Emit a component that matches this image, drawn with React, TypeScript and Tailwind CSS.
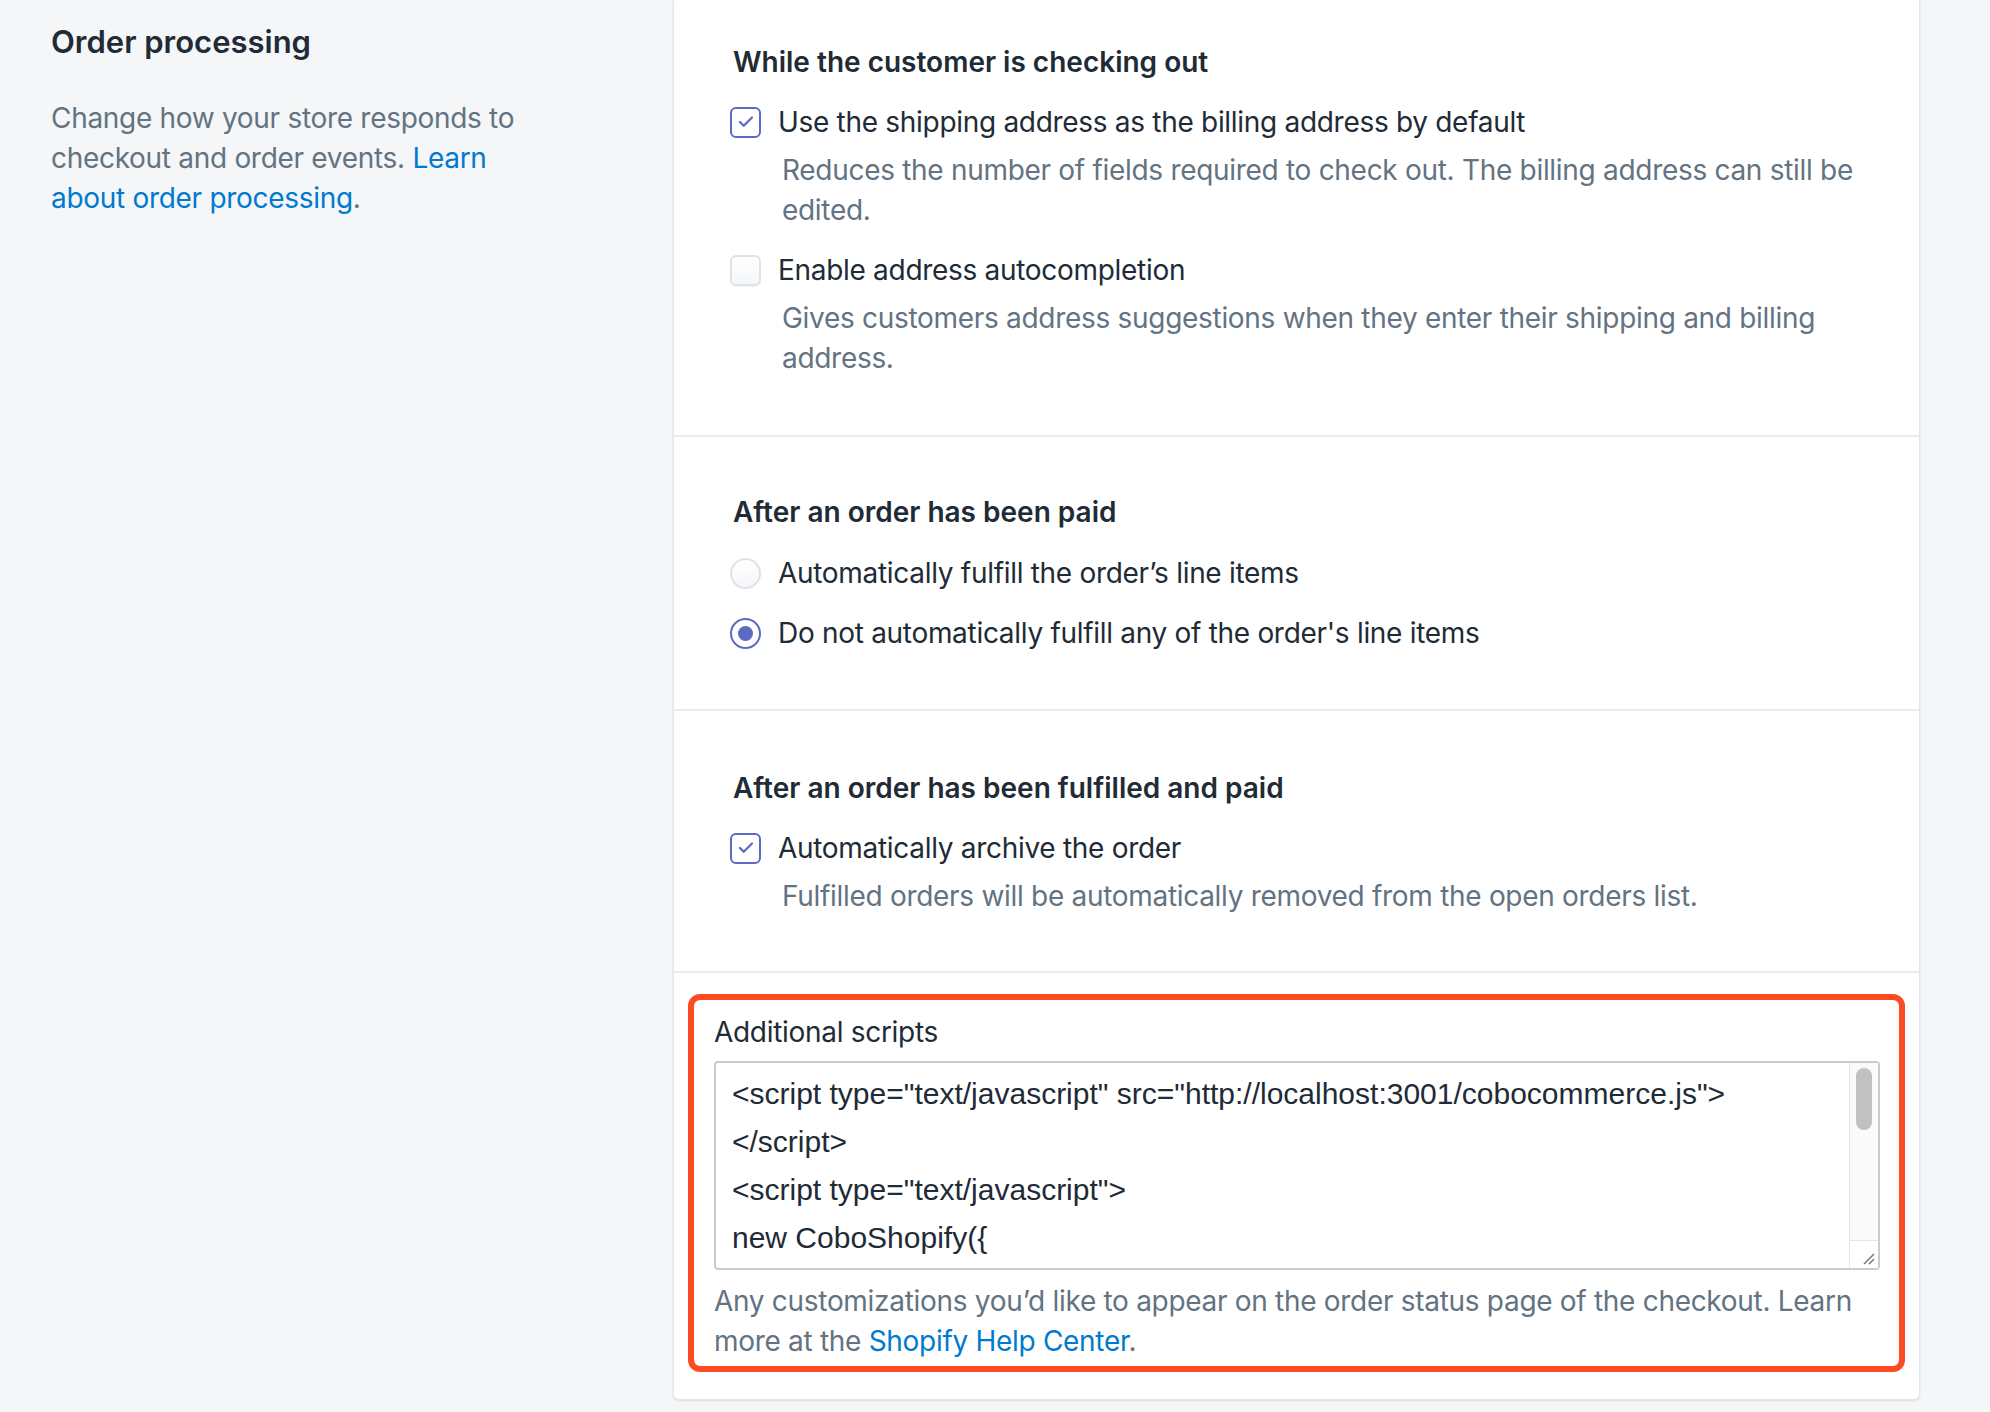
import { Check } from 'lucide-react';

const FONT = { fontFamily: 'Inter, "Noto Sans", sans-serif' };

function Checkbox({ checked }: { checked?: boolean }) {
  if (checked) {
    return (
      <span className="flex h-[31px] w-[31px] shrink-0 items-center justify-center rounded-[6px] border-2 border-[#5c6ac4] bg-white">
        <Check className="h-[18px] w-[18px] text-[#5c6ac4]" strokeWidth={3} />
      </span>
    );
  }
  return (
    <span className="block h-[31px] w-[31px] shrink-0 rounded-[6px] border-2 border-[#dfe3e8] bg-gradient-to-b from-white to-[#f4f6f8] shadow-[0_1px_0_rgba(22,29,37,0.05)]" />
  );
}

function Radio({ checked }: { checked?: boolean }) {
  if (checked) {
    return (
      <span className="flex h-[31px] w-[31px] shrink-0 items-center justify-center rounded-full border-2 border-[#5c6ac4] bg-white">
        <span className="block h-[15px] w-[15px] rounded-full bg-[#5c6ac4]" />
      </span>
    );
  }
  return (
    <span className="block h-[31px] w-[31px] shrink-0 rounded-full border-2 border-[#dfe3e8] bg-gradient-to-b from-white to-[#f4f6f8]" />
  );
}

function Option({
  control,
  label,
  help,
}: {
  control: React.ReactNode;
  label: string;
  help?: string;
}) {
  return (
    <div>
      <div className="flex items-center gap-[17px]">
        {control}
        <span className="text-[28px] leading-[40px] tracking-[-0.3px] text-[#212b36]">{label}</span>
      </div>
      {help && (
        <p className="mt-[8px] pl-[52px] text-[28px] leading-[40px] tracking-[-0.3px] text-[#637381]">{help}</p>
      )}
    </div>
  );
}

function Heading({ children }: { children: React.ReactNode }) {
  return <h3 className="pl-[3px] text-[28px] font-semibold leading-[40px] text-[#212b36]">{children}</h3>;
}

const SCRIPT_LINES = [
  '<script type="text/javascript" src="http://localhost:3001/cobocommerce.js">',
  '</script>',
  '<script type="text/javascript">',
  'new CoboShopify({',
];

export default function App() {
  return (
    <div className="flex min-h-[1412px] w-[1990px] bg-[#f4f6f8]" style={FONT}>
      {/* Description column */}
      <div className="w-[673px] shrink-0 pl-[51px] pt-[22px]">
        <h2 className="text-[31px] font-semibold leading-[40px] text-[#212b36]">Order processing</h2>
        <p className="mt-[36px] w-[480px] text-[28px] leading-[40px] tracking-[-0.3px] text-[#637381]">
          Change how your store responds to checkout and order events.{' '}
          <a className="text-[#007ace]">Learn about order processing</a>.
        </p>
      </div>

      {/* Settings card */}
      <div className="h-[1400px] w-[1247px] shrink-0 rounded-b-[6px] border-x border-b border-[#e3e6ea] bg-white shadow-[0_1px_2px_rgba(63,63,68,0.15)]">
        <section className="border-b-2 border-[#e9ecef] px-[56px] pb-[57px] pt-[42px]">
          <Heading>While the customer is checking out</Heading>
          <div className="mt-[20px] flex flex-col gap-[20px]">
            <Option
              control={<Checkbox checked />}
              label="Use the shipping address as the billing address by default"
              help="Reduces the number of fields required to check out. The billing address can still be edited."
            />
            <Option
              control={<Checkbox />}
              label="Enable address autocompletion"
              help="Gives customers address suggestions when they enter their shipping and billing address."
            />
          </div>
        </section>

        <section className="border-b-2 border-[#e9ecef] px-[56px] pb-[56px] pt-[55px]">
          <Heading>After an order has been paid</Heading>
          <div className="mt-[21px] flex flex-col gap-[20px]">
            <Option control={<Radio />} label="Automatically fulfill the order’s line items" />
            <Option control={<Radio checked />} label="Do not automatically fulfill any of the order's line items" />
          </div>
        </section>

        <section className="border-b-2 border-[#e9ecef] px-[56px] pb-[55px] pt-[57px]">
          <Heading>After an order has been fulfilled and paid</Heading>
          <div className="mt-[20px]">
            <Option
              control={<Checkbox checked />}
              label="Automatically archive the order"
              help="Fulfilled orders will be automatically removed from the open orders list."
            />
          </div>
        </section>

        <section className="px-[14px] pt-[21px]">
          <div className="rounded-[12px] border-[6px] border-[#fe4a22] pb-[5px] pl-[20px] pr-[19px] pt-[12px]">
            <label className="block text-[28px] leading-[40px] tracking-[-0.3px] text-[#212b36]">Additional scripts</label>
            <div className="mt-[9px] flex h-[209px] rounded-[4px] border-2 border-[#c4cdd5] bg-white">
              <div
                className="flex-1 overflow-hidden pl-[16px] pt-[7px] text-[30px] leading-[48px] text-[#212b36]"
                style={{ fontFamily: '"Liberation Sans", Arial, sans-serif' }}
              >
                {SCRIPT_LINES.map((line) => (
                  <div key={line} className="whitespace-pre">{line}</div>
                ))}
              </div>
              <div className="flex w-[29px] flex-col border-l border-[#e6e6e6] bg-[#fafafa]">
                <div className="flex-1 px-[6px] pt-[5px]">
                  <div className="h-[62px] rounded-full bg-[#c1c1c1]" />
                </div>
                <div className="relative h-[28px] border-t border-[#e6e6e6] bg-white">
                  <svg className="absolute bottom-[3px] right-[3px]" width="14" height="14" viewBox="0 0 14 14">
                    <path d="M13 3L3 13M13 8L8 13" stroke="#777" strokeWidth="1.5" />
                  </svg>
                </div>
              </div>
            </div>
            <p className="mt-[11px] text-[28px] leading-[40px] tracking-[-0.3px] text-[#637381]">
              Any customizations you’d like to appear on the order status page of the checkout. Learn more at the{' '}
              <a className="text-[#007ace]">Shopify Help Center</a>.
            </p>
          </div>
        </section>
      </div>
    </div>
  );
}
